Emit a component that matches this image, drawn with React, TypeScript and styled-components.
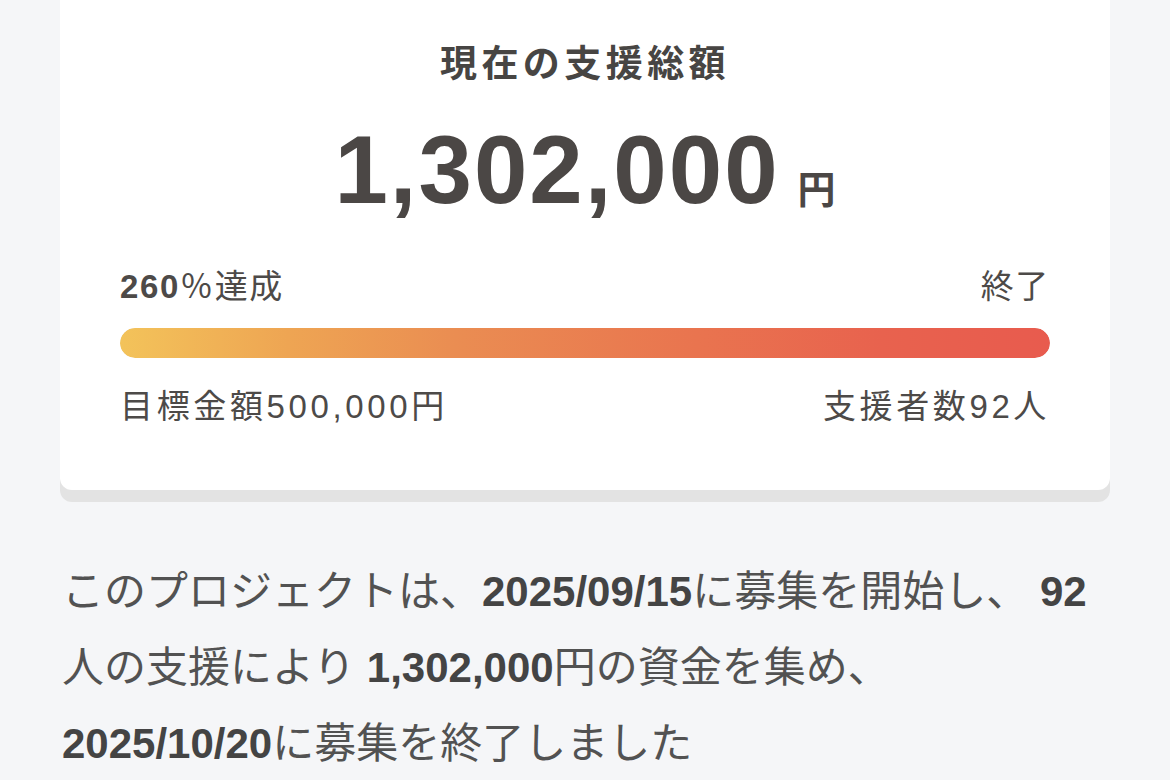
import React from "react";
import styled, { createGlobalStyle } from "styled-components";

const GlobalStyle = createGlobalStyle`
  html, body {
    margin: 0;
    padding: 0;
    background: #f5f6f8;
  }
  body {
    font-family: "Liberation Sans", "Noto Sans CJK JP", sans-serif;
    color: #4a4745;
  }
`;

const Page = styled.div`
  width: 1170px;
  height: 780px;
  overflow: hidden;
  padding: 0 60px;
  box-sizing: border-box;
`;

const Card = styled.section`
  background: #fff;
  border-radius: 0 0 12px 12px;
  box-shadow: 0 12px 0 #e3e3e3;
  padding: 45px 60px 63px;
  display: flex;
  flex-direction: column;
`;

const Title = styled.h2`
  margin: 0;
  text-align: center;
  font-size: 37px;
  line-height: 40px;
  font-weight: 700;
  letter-spacing: 0.12em;
  color: #474543;
`;

const AmountRow = styled.div`
  margin-top: 37px;
  display: flex;
  justify-content: center;
  align-items: baseline;
  gap: 18px;
`;

const Amount = styled.span`
  font-size: 96px;
  line-height: 96px;
  font-weight: 700;
  letter-spacing: 2px;
  color: #4b4745;
`;

const Yen = styled.span`
  font-size: 38px;
  line-height: 40px;
  font-weight: 700;
  color: #4b4745;
`;

const InfoRow = styled.div<{ $gap: number; $spacing: number }>`
  margin-top: ${(p) => p.$gap}px;
  display: flex;
  justify-content: space-between;
  align-items: center;
  font-size: 33px;
  line-height: 40px;
  letter-spacing: ${(p) => p.$spacing}em;
  color: #4d4a48;
`;

const Strong = styled.b`
  font-weight: 700;
`;

const Track = styled.div`
  margin-top: 21px;
  height: 30px;
  border-radius: 15px;
  background: #f1f1f1;
  overflow: hidden;
`;

const Fill = styled.div`
  height: 100%;
  border-radius: 15px;
  background: linear-gradient(
    90deg,
    #f3c35a 0%,
    #eea553 18%,
    #ea8d52 36%,
    #e9744f 62%,
    #e8624e 82%,
    #e85b4e 100%
  );
`;

const Summary = styled.p`
  margin: 64px 0 0 2px;
  font-size: 42px;
  line-height: 76px;
  color: #525252;

  b {
    font-weight: 700;
    color: #444;
  }
`;

const App = () => {
  const rate = 260;
  const fillWidth = Math.min(rate, 100);

  return (
    <>
      <GlobalStyle />
      <Page>
        <Card>
          <Title>現在の支援総額</Title>
          <AmountRow>
            <Amount>1,302,000</Amount>
            <Yen>円</Yen>
          </AmountRow>
          <InfoRow $gap={49} $spacing={0.05}>
            <span>
              <Strong>{rate}</Strong>％達成
            </span>
            <span>終了</span>
          </InfoRow>
          <Track>
            <Fill style={{ width: `${fillWidth}%` }} />
          </Track>
          <InfoRow $gap={29} $spacing={0.11}>
            <span>目標金額500,000円</span>
            <span>支援者数92人</span>
          </InfoRow>
        </Card>
        <Summary>
          このプロジェクトは、<b>2025/09/15</b>に募集を開始し、 <b>92</b>
          <br />
          人の支援により <b>1,302,000</b>円の資金を集め、
          <br />
          <b>2025/10/20</b>に募集を終了しました
        </Summary>
      </Page>
    </>
  );
};

export default App;
